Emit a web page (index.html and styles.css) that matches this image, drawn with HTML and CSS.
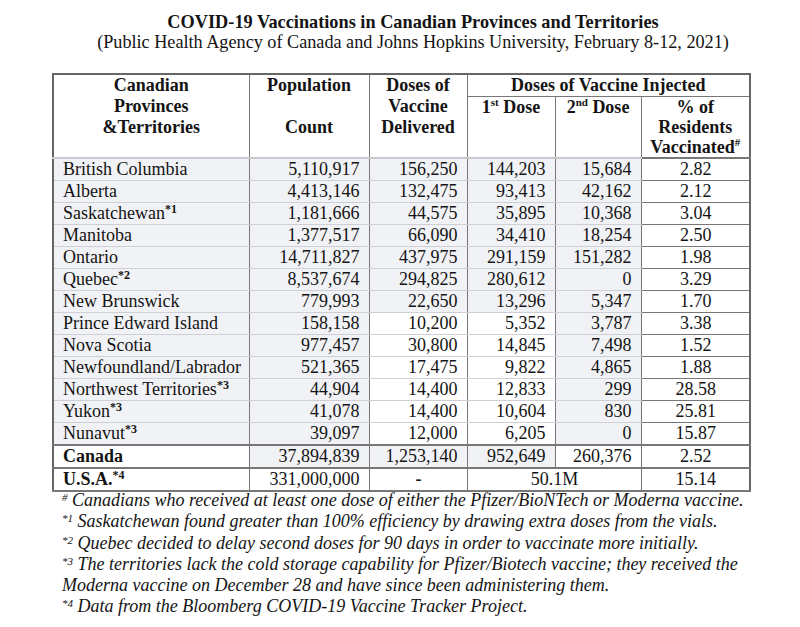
FILE: index.html
```html
<!DOCTYPE html>
<html>
<head>
<meta charset="utf-8">
<link rel="stylesheet" href="styles.css">
</head>
<body>
<div class="page">
  <div class="heading">
    <h1 class="title">COVID-19 Vaccinations in Canadian Provinces and Territories</h1>
    <p class="subtitle">(Public Health Agency of Canada and Johns Hopkins University, February 8-12, 2021)</p>
  </div>
  <table class="vax">
    <colgroup>
      <col class="c1"><col class="c2"><col class="c3"><col class="c4"><col class="c5"><col class="c6">
    </colgroup>
    <thead>
      <tr class="h1">
        <th rowspan="2">Canadian<br>Provinces<br>&amp;Territories</th>
        <th rowspan="2">Population<br><br>Count</th>
        <th rowspan="2">Doses of<br>Vaccine<br>Delivered</th>
        <th colspan="3" class="group">Doses of Vaccine Injected</th>
      </tr>
      <tr class="h2">
        <th>1<sup>st</sup> Dose</th>
        <th>2<sup>nd</sup> Dose</th>
        <th class="pct">% of<br>Residents<br>Vaccinated<sup>#</sup></th>
      </tr>
    </thead>
    <tbody>
      <tr><td class="name">British Columbia</td><td>5,110,917</td><td>156,250</td><td>144,203</td><td>15,684</td><td class="pct">2.82</td></tr>
      <tr><td class="name">Alberta</td><td>4,413,146</td><td>132,475</td><td>93,413</td><td>42,162</td><td class="pct">2.12</td></tr>
      <tr><td class="name">Saskatchewan<b class="fn">*1</b></td><td>1,181,666</td><td>44,575</td><td>35,895</td><td>10,368</td><td class="pct">3.04</td></tr>
      <tr><td class="name">Manitoba</td><td>1,377,517</td><td>66,090</td><td>34,410</td><td>18,254</td><td class="pct">2.50</td></tr>
      <tr><td class="name">Ontario</td><td>14,711,827</td><td>437,975</td><td>291,159</td><td>151,282</td><td class="pct">1.98</td></tr>
      <tr><td class="name">Quebec<b class="fn">*2</b></td><td>8,537,674</td><td>294,825</td><td>280,612</td><td>0</td><td class="pct">3.29</td></tr>
      <tr><td class="name">New Brunswick</td><td>779,993</td><td>22,650</td><td>13,296</td><td>5,347</td><td class="pct">1.70</td></tr>
      <tr><td class="name">Prince Edward Island</td><td>158,158</td><td class="w">10,200</td><td class="w">5,352</td><td>3,787</td><td class="pct">3.38</td></tr>
      <tr><td class="name">Nova Scotia</td><td>977,457</td><td class="w">30,800</td><td class="w">14,845</td><td>7,498</td><td class="pct">1.52</td></tr>
      <tr><td class="name">Newfoundland/Labrador</td><td>521,365</td><td class="w">17,475</td><td class="w">9,822</td><td>4,865</td><td class="pct">1.88</td></tr>
      <tr><td class="name">Northwest Territories<b class="fn">*3</b></td><td>44,904</td><td class="w">14,400</td><td class="w">12,833</td><td>299</td><td class="pct">28.58</td></tr>
      <tr><td class="name">Yukon<b class="fn">*3</b></td><td>41,078</td><td class="w">14,400</td><td class="w">10,604</td><td>830</td><td class="pct">25.81</td></tr>
      <tr><td class="name">Nunavut<b class="fn">*3</b></td><td>39,097</td><td class="w">12,000</td><td class="w">6,205</td><td>0</td><td class="pct">15.87</td></tr>
      <tr class="total"><td class="name w"><b>Canada</b></td><td>37,894,839</td><td>1,253,140</td><td>952,649</td><td class="w">260,376</td><td class="pct">2.52</td></tr>
      <tr class="usa"><td class="name w"><b>U.S.A.<span class="fn">*4</span></b></td><td class="w">331,000,000</td><td class="w ctr"><b>-</b></td><td class="w ctr" colspan="2">50.1M</td><td class="pct">15.14</td></tr>
    </tbody>
  </table>
  <div class="notes">
    <p><sup>#</sup> Canadians who received at least one dose of either the Pfizer/BioNTech or Moderna vaccine.</p>
    <p><sup>*1</sup> Saskatchewan found greater than 100% efficiency by drawing extra doses from the vials.</p>
    <p><sup>*2</sup> Quebec decided to delay second doses for 90 days in order to vaccinate more initially.</p>
    <p><sup>*3</sup> The territories lack the cold storage capability for Pfizer/Biotech vaccine; they received the Moderna vaccine on December 28 and have since been administering them.</p>
    <p><sup>*4</sup> Data from the Bloomberg COVID-19 Vaccine Tracker Project.</p>
  </div>
</div>
</body>
</html>
```
FILE: styles.css
```css
html, body {
  margin: 0;
  padding: 0;
  background: #fff;
}
body {
  font-family: "Liberation Serif", "Times New Roman", serif;
  color: #141414;
  font-size: 18px;
}
.page {
  width: 800px;
  height: 627px;
  overflow: hidden;
  padding-top: 12px;
  box-sizing: border-box;
}
.heading {
  padding-left: 26px;
  text-align: center;
}
.title {
  margin: 0;
  font-size: 18.3px;
  line-height: 20px;
  font-weight: bold;
}
.subtitle {
  margin: 0;
  font-size: 18.2px;
  line-height: 20px;
}
.vax {
  margin: 21px 0 0 52px;
  width: 698px;
  border-collapse: collapse;
  table-layout: fixed;
  border: 2px solid #666;
}
.c1 { width: 196px; }
.c2 { width: 120px; }
.c3 { width: 98px; }
.c4 { width: 88px; }
.c5 { width: 86px; }
.c6 { width: 109px; }
.vax th {
  font-weight: bold;
  vertical-align: top;
  text-align: center;
  line-height: 21px;
  padding: 0 2px;
  border-left: 1.5px solid #777;
  border-right: 1.5px solid #777;
  border-bottom: 2px solid #c9cacf;
}
.vax .h1 th { height: 20px; }
.vax .h1 th.group { border-bottom: 1.5px solid #777; }
.vax .h2 th { height: 60px; line-height: 20px; }
.vax .h2 th.pct { border-bottom: 2px solid #777; }
.vax sup {
  font-size: 11px;
  line-height: 0;
  vertical-align: 7px;
}
.vax td {
  height: 21px;
  line-height: 21px;
  padding: 0 9px 0 10px;
  text-align: right;
  white-space: nowrap;
  background: #f1f2f5;
  border-left: 1.5px solid #777;
  border-right: 1.5px solid #777;
  border-top: 1px solid #cfd0d5;
  border-bottom: 1px solid #cfd0d5;
}
.vax td.name { text-align: left; padding: 0 2px 0 9px; }
.vax td.pct {
  text-align: center;
  background: #fff;
  border-top: 1px solid #777;
  border-bottom: 1px solid #777;
}
.vax td.w { background: #fff; }
.vax td.ctr { text-align: center; }
.vax tr.total td, .vax tr.usa td {
  border-top: 2px solid #777;
  border-bottom: 2px solid #777;
}
.fn {
  font-weight: bold;
  font-size: 12px;
  vertical-align: 6px;
  line-height: 0;
}
.notes {
  margin-left: 62px;
  margin-top: -2px;
  width: 710px;
  font-style: italic;
}
.notes p {
  margin: 0;
  line-height: 21.3px;
}
.notes sup {
  font-size: 11px;
  line-height: 0;
  vertical-align: 5px;
}
```
